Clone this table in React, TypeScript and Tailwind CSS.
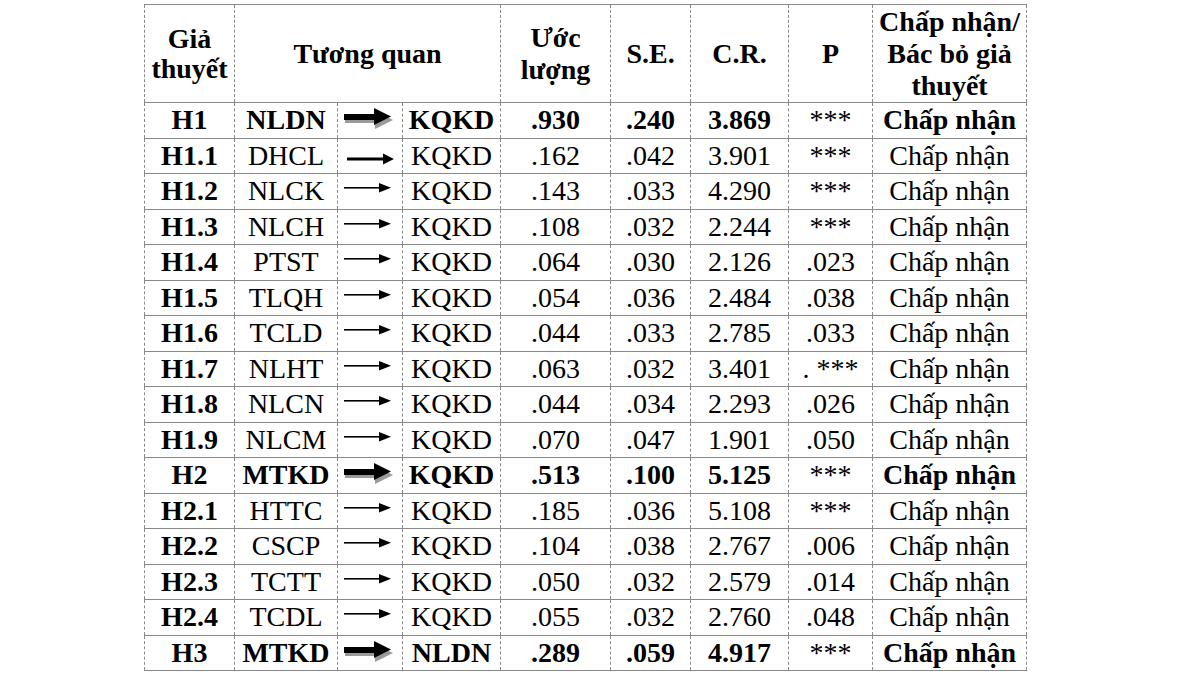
import React from "react";

type Row = {
  h: string;
  a: string;
  b: string;
  est: string;
  se: string;
  cr: string;
  p: string;
  bold?: boolean;
  arrow: "thick" | "medium" | "thin";
};

const rows: Row[] = [
  { h: "H1", a: "NLDN", b: "KQKD", est: ".930", se: ".240", cr: "3.869", p: "***", bold: true, arrow: "thick" },
  { h: "H1.1", a: "DHCL", b: "KQKD", est: ".162", se: ".042", cr: "3.901", p: "***", arrow: "medium" },
  { h: "H1.2", a: "NLCK", b: "KQKD", est: ".143", se: ".033", cr: "4.290", p: "***", arrow: "thin" },
  { h: "H1.3", a: "NLCH", b: "KQKD", est: ".108", se: ".032", cr: "2.244", p: "***", arrow: "thin" },
  { h: "H1.4", a: "PTST", b: "KQKD", est: ".064", se: ".030", cr: "2.126", p: ".023", arrow: "thin" },
  { h: "H1.5", a: "TLQH", b: "KQKD", est: ".054", se: ".036", cr: "2.484", p: ".038", arrow: "thin" },
  { h: "H1.6", a: "TCLD", b: "KQKD", est: ".044", se: ".033", cr: "2.785", p: ".033", arrow: "thin" },
  { h: "H1.7", a: "NLHT", b: "KQKD", est: ".063", se: ".032", cr: "3.401", p: ". ***", arrow: "thin" },
  { h: "H1.8", a: "NLCN", b: "KQKD", est: ".044", se: ".034", cr: "2.293", p: ".026", arrow: "thin" },
  { h: "H1.9", a: "NLCM", b: "KQKD", est: ".070", se: ".047", cr: "1.901", p: ".050", arrow: "thin" },
  { h: "H2", a: "MTKD", b: "KQKD", est: ".513", se: ".100", cr: "5.125", p: "***", bold: true, arrow: "thick" },
  { h: "H2.1", a: "HTTC", b: "KQKD", est: ".185", se: ".036", cr: "5.108", p: "***", arrow: "thin" },
  { h: "H2.2", a: "CSCP", b: "KQKD", est: ".104", se: ".038", cr: "2.767", p: ".006", arrow: "thin" },
  { h: "H2.3", a: "TCTT", b: "KQKD", est: ".050", se: ".032", cr: "2.579", p: ".014", arrow: "thin" },
  { h: "H2.4", a: "TCDL", b: "KQKD", est: ".055", se: ".032", cr: "2.760", p: ".048", arrow: "thin" },
  { h: "H3", a: "MTKD", b: "NLDN", est: ".289", se: ".059", cr: "4.917", p: "***", bold: true, arrow: "thick" },
];

function Arrow({ kind }: { kind: Row["arrow"] }) {
  if (kind === "thick") {
    return (
      <svg width="64" height="34" viewBox="0 0 64 34" className="block">
        <g fill="#9a9a9a">
          <rect x="7" y="14" width="31" height="6" />
          <polygon points="37,8 55,17 37,26" />
        </g>
        <g fill="#000">
          <rect x="6" y="11" width="31" height="6" />
          <polygon points="36,5 53,13.5 36,22" />
        </g>
      </svg>
    );
  }
  if (kind === "medium") {
    return (
      <svg width="64" height="34" viewBox="0 0 64 34" className="block">
        <rect x="9" y="18.5" width="38" height="3" fill="#000" />
        <polygon points="45,14.5 56,20 45,25.5" fill="#000" />
      </svg>
    );
  }
  return (
    <svg width="64" height="34" viewBox="0 0 64 34" className="block">
      <rect x="6" y="13" width="37" height="1.6" fill="#000" />
      <polygon points="41,9 53,13.8 41,18.6" fill="#000" />
    </svg>
  );
}

const cell =
  "border-x border-x-[#8a8a8a] border-dashed border-y border-y-[#8a8a8a] [border-top-style:solid] [border-bottom-style:solid] text-center align-middle p-0 whitespace-nowrap font-['Liberation_Serif','Times_New_Roman',serif]";

export default function App() {
  return (
    <div className="w-[1180px] h-[680px] bg-white text-black font-['Liberation_Serif','Times_New_Roman',serif]">
      <div className="pt-[4px] pl-[144px]">
        <table className="table-fixed border-collapse w-[882px] text-[28px] leading-[32px]">
          <colgroup>
            <col className="w-[90px]" />
            <col className="w-[103px]" />
            <col className="w-[65px]" />
            <col className="w-[98px]" />
            <col className="w-[110px]" />
            <col className="w-[80px]" />
            <col className="w-[98px]" />
            <col className="w-[84px]" />
            <col className="w-[154px]" />
          </colgroup>
          <thead>
            <tr className="h-[98px] font-bold">
              <th className={`${cell} leading-[30px]`}>
                Giả
                <br />
                thuyết
              </th>
              <th colSpan={3} className={cell}>
                Tương quan
              </th>
              <th className={cell}>
                Ước
                <br />
                lượng
              </th>
              <th className={cell}>S.E.</th>
              <th className={cell}>C.R.</th>
              <th className={cell}>P</th>
              <th className={`${cell} leading-[32px]`}>
                Chấp nhận/
                <br />
                Bác bỏ giả
                <br />
                thuyết
              </th>
            </tr>
          </thead>
          <tbody>
            {rows.map((r) => {
              const w = r.bold ? "font-bold" : "font-normal";
              return (
                <tr key={r.h} className="h-[35.5px]">
                  <td className={`${cell} font-bold`}>{r.h}</td>
                  <td className={`${cell} ${w}`}>{r.a}</td>
                  <td className={cell}>
                    <Arrow kind={r.arrow} />
                  </td>
                  <td className={`${cell} ${w}`}>{r.b}</td>
                  <td className={`${cell} ${w}`}>{r.est}</td>
                  <td className={`${cell} ${w}`}>{r.se}</td>
                  <td className={`${cell} ${w}`}>{r.cr}</td>
                  <td className={cell}>{r.p}</td>
                  <td className={`${cell} ${w}`}>Chấp nhận</td>
                </tr>
              );
            })}
          </tbody>
        </table>
      </div>
    </div>
  );
}
